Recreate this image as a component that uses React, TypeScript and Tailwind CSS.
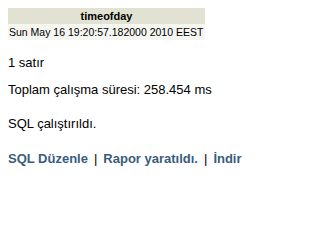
export default function App() {
  return (
    <div className="min-h-screen bg-white p-2 text-[13px] text-black" style={{ fontFamily: '"Liberation Sans", Arial, sans-serif' }}>
      <table className="w-[197px] border-collapse">
        <thead>
          <tr className="bg-[#e2e2d3]">
            <th className="h-4 p-0 text-center text-[11px] font-bold leading-4">timeofday</th>
          </tr>
        </thead>
        <tbody>
          <tr className="bg-[#f6f6f1]">
            <td className="h-4 whitespace-nowrap p-0 pl-px text-[10.5px] leading-4">Sun May 16 19:20:57.182000 2010 EEST</td>
          </tr>
        </tbody>
      </table>
      <p className="mt-[15px] leading-[15px]">1 satır</p>
      <p className="mt-[12px] leading-[15px]">Toplam çalışma süresi: 258.454 ms</p>
      <p className="mt-[19px] leading-[15px]">SQL çalıştırıldı.</p>
      <div className="mt-[20px] flex items-center gap-[6px] leading-[15px]">
        <a className="font-bold text-[#3a5c7c]">SQL Düzenle</a>
        <span>|</span>
        <a className="font-bold text-[#3a5c7c]">Rapor yaratıldı.</a>
        <span>|</span>
        <a className="font-bold text-[#3a5c7c]">İndir</a>
      </div>
    </div>
  );
}
